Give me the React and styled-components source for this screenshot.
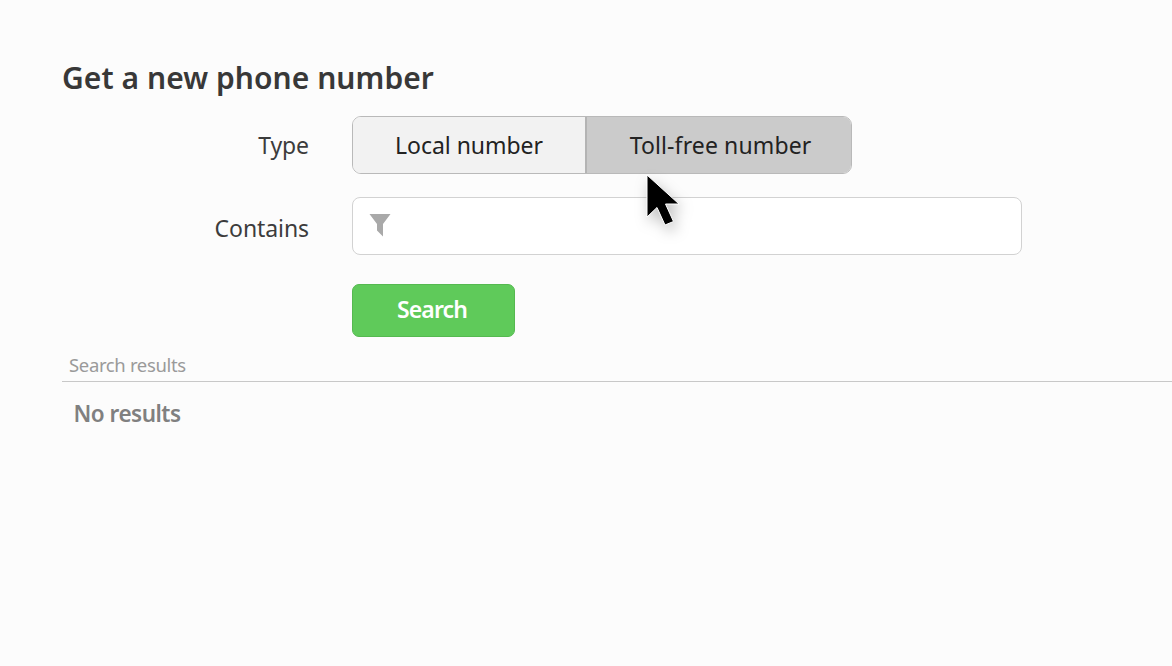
import React from "react";
import styled, { createGlobalStyle } from "styled-components";

const GlobalStyle = createGlobalStyle`
    html, body {
        margin: 0;
        padding: 0;
        background: #fcfcfc;
    }

    body {
        font-family: "Noto Sans", "Open Sans", sans-serif;
        overflow: hidden;
    }
`

const Page = styled.div`
    position: relative;
    height: 666px;
    padding: 57px 0 0 62px;
    box-sizing: border-box;
`

const Title = styled.h1`
    margin: 0 0 17px;
    height: 42px;
    line-height: 42px;
    font-size: 30px;
    font-weight: 600;
    letter-spacing: 0.05px;
    color: #383838;
`

const Row = styled.div`
    display: flex;
    align-items: center;
    margin-bottom: ${(props) => props.$gap}px;
`

const Label = styled.label`
    width: 247px;
    margin-right: 43px;
    padding-top: ${(props) => props.$nudge || 0}px;
    text-align: right;
    font-size: 23px;
    letter-spacing: -0.08px;
    color: #3c3c3c;
`

const Toggle = styled.div`
    display: flex;
    width: 500px;
    height: 58px;
    box-sizing: border-box;
    border: solid 1px #b9b9b9;
    border-radius: 9px;
    overflow: hidden;
`

const ToggleOption = styled.button`
    width: ${(props) => props.$width}px;
    padding: 0 0 0 ${(props) => (props.$active ? 3 : 0)}px;
    border: none;
    border-left: ${(props) => (props.$active ? "solid 2px #b4b4b4" : "none")};
    background: ${(props) => (props.$active ? "#cbcbcb" : "#f2f2f2")};
    font-family: inherit;
    font-size: 23px;
    letter-spacing: ${(props) => (props.$active ? "0.12px" : "-0.03px")};
    color: #222;
`

const InputBox = styled.div`
    display: flex;
    align-items: center;
    width: 670px;
    height: 58px;
    box-sizing: border-box;
    padding-left: 16px;
    background: #fff;
    border: solid 1px #d2d2d2;
    border-radius: 8px;

    svg {
        margin-top: -2px;
    }
`

const SearchButton = styled.button`
    display: block;
    width: 163px;
    height: 53px;
    margin: 0 0 17px 290px;
    padding: 0 3px 4px 0;
    background: #5fca5a;
    border: solid 1px #55b950;
    border-radius: 7px;
    font-family: inherit;
    font-size: 23px;
    font-weight: 600;
    letter-spacing: -0.85px;
    color: #fff;
`

const ResultsHeader = styled.div`
    height: 27px;
    line-height: 22px;
    padding-left: 7px;
    border-bottom: solid 1px #c8c8c8;
    font-size: 18.5px;
    letter-spacing: -0.35px;
    color: #9a9a9a;
`

const NoResults = styled.div`
    margin: 15px 0 0 11.5px;
    line-height: 34px;
    font-size: 22.5px;
    font-weight: 600;
    letter-spacing: -0.5px;
    color: #808080;
`

const Cursor = styled.svg`
    position: absolute;
    left: 644px;
    top: 172px;
    filter: drop-shadow(3px 6px 7px rgba(0, 0, 0, 0.25));
`

const App = () => {
    return (
        <Page>
            <GlobalStyle />
            <Title>Get a new phone number</Title>

            <Row $gap={23}>
                <Label>Type</Label>
                <Toggle>
                    <ToggleOption $width={232}>Local number</ToggleOption>
                    <ToggleOption $width={266} $active>Toll-free number</ToggleOption>
                </Toggle>
            </Row>

            <Row $gap={29}>
                <Label $nudge={4}>Contains</Label>
                <InputBox>
                    <svg width="22" height="24" viewBox="0 0 22 24">
                        <path d="M0.5 1 H21.5 L14 11 V23.5 L8 17.5 V11 Z" fill="#a9a9a9" />
                    </svg>
                </InputBox>
            </Row>

            <SearchButton>Search</SearchButton>

            <ResultsHeader>Search results</ResultsHeader>
            <NoResults>No results</NoResults>

            <Cursor width="40" height="58" viewBox="0 0 40 58">
                <path
                    d="M3 3 L3 45 L13 35.5 L21 53 L29.5 49.5 L21.5 32 L35 32 Z"
                    fill="#000"
                    stroke="#fff"
                    strokeWidth="1"
                />
            </Cursor>
        </Page>
    )
}

export default App;
